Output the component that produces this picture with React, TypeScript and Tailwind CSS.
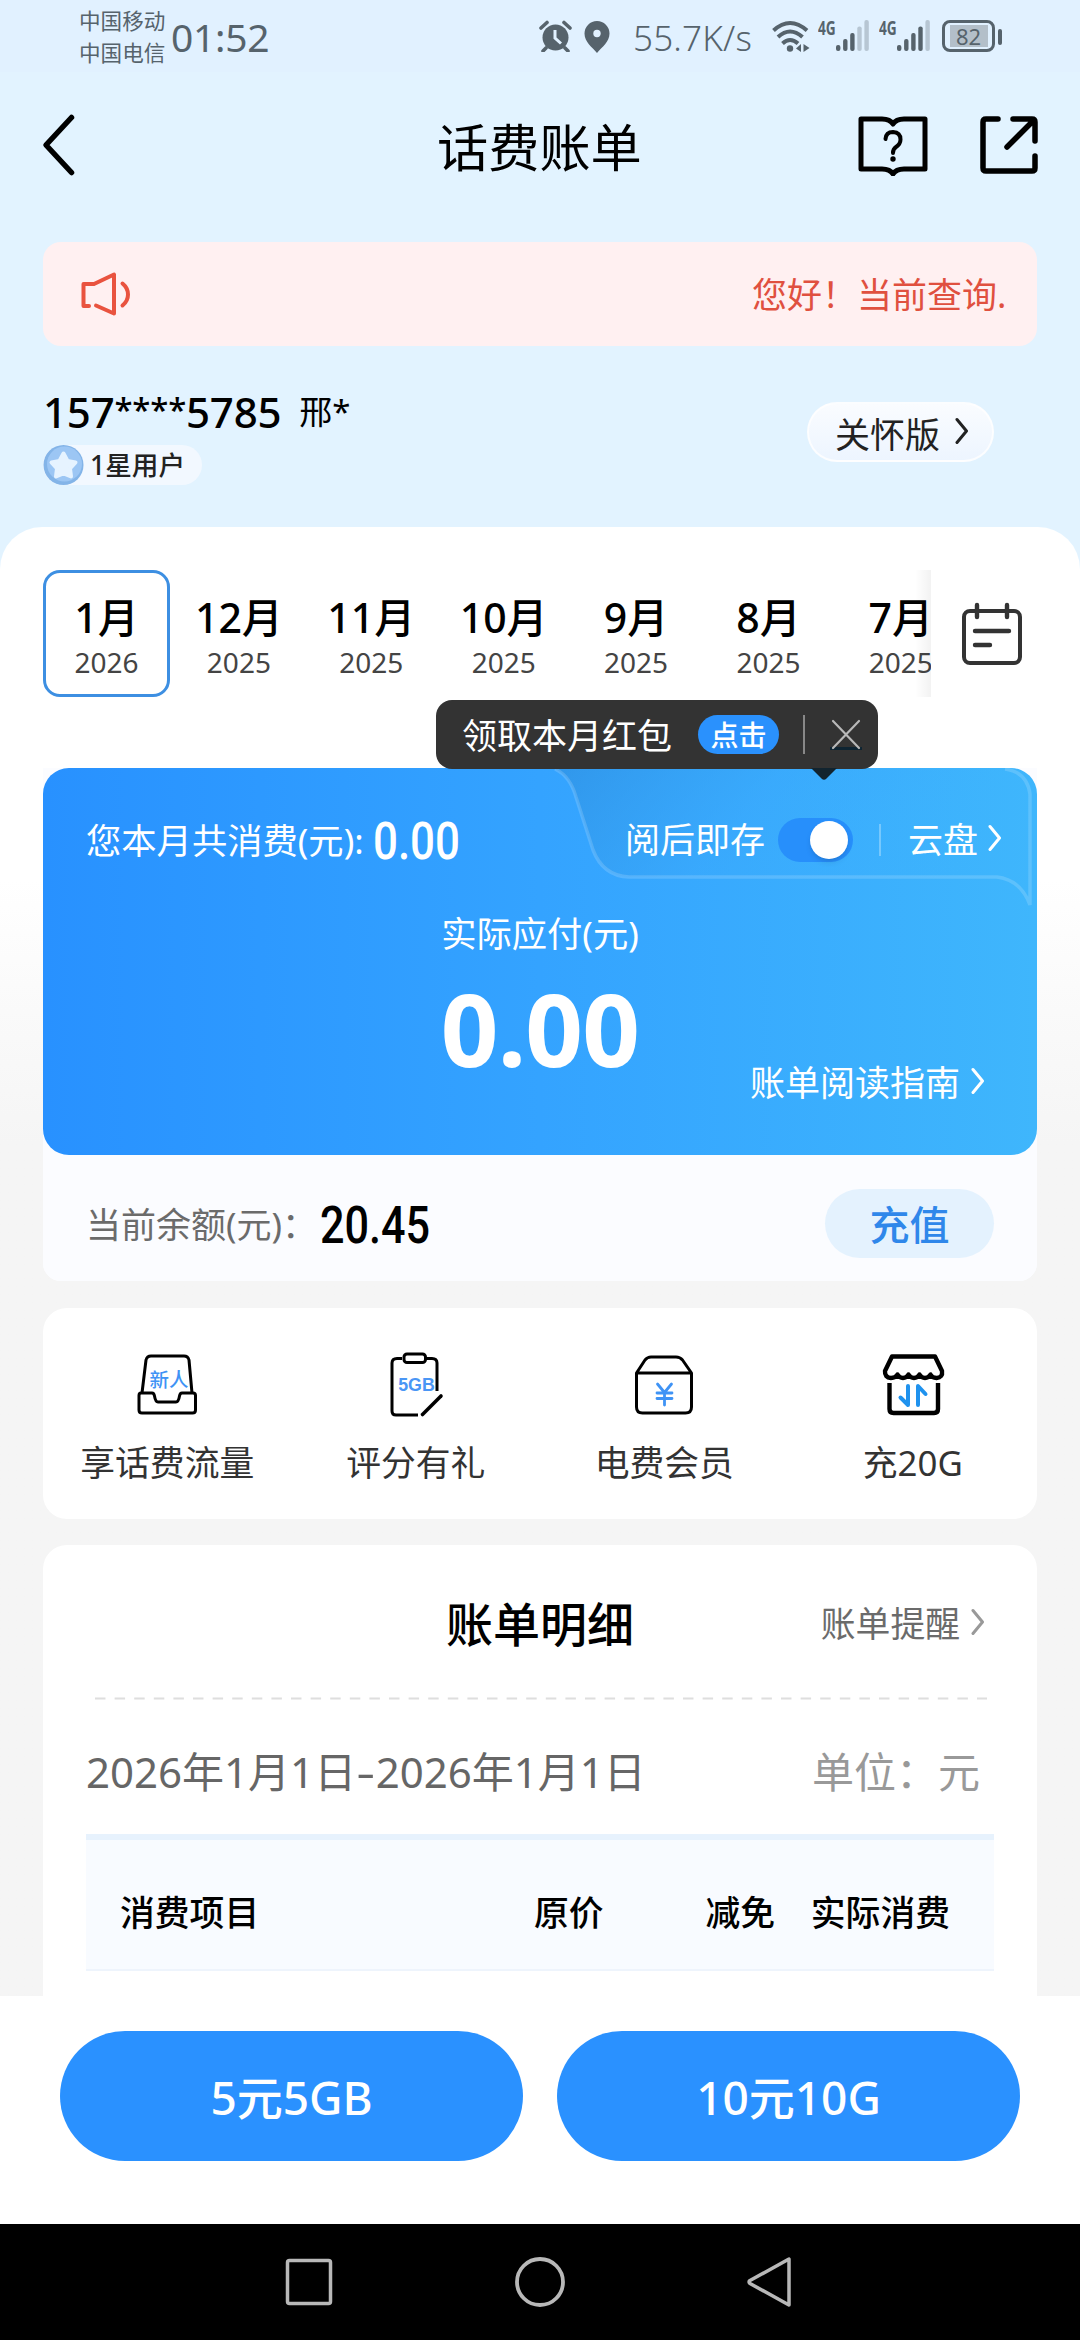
import React from "react";

const months = [
  { m: "1月", y: "2026", active: true },
  { m: "12月", y: "2025" },
  { m: "11月", y: "2025" },
  { m: "10月", y: "2025" },
  { m: "9月", y: "2025" },
  { m: "8月", y: "2025" },
  { m: "7月", y: "2025" },
];

function Chevron({ className = "" }: { className?: string }) {
  return (
    <svg width="14" height="28" viewBox="0 0 14 28" fill="none" stroke="currentColor" strokeWidth="3" strokeLinecap="round" strokeLinejoin="round" className={className}>
      <path d="M2 2.5 11.5 14 2 25.5" />
    </svg>
  );
}

function SignalBars({ active }: { active: number }) {
  return (
    <svg width="34" height="31" viewBox="0 0 34 31" fill="#56636c">
      {[0, 1, 2, 3, 4].map((i) => {
        const h = [6, 12, 18, 24.5, 31][i];
        return <rect key={i} x={i * 7.1} y={31 - h} width="4.4" height={h} rx="2" opacity={i < active ? 1 : 0.3} />;
      })}
    </svg>
  );
}

function StatusBar() {
  return (
    <div className="flex h-[72px] items-start bg-[#e1f1ff] text-[#56636c]">
      <div className="ml-[79px] mt-[5px] w-[87px] text-[21.6px] leading-[32px]">
        <div>中国移动</div>
        <div>中国电信</div>
      </div>
      <div className="ml-[5px] mt-[13px] w-[102px] text-[39px] leading-[48px] tracking-[-0.3px]">01:52</div>
      <svg className="ml-[266px] mt-[20px]" width="34" height="32" viewBox="0 0 34 32" fill="none">
        <circle cx="16.5" cy="17.5" r="13" fill="#56636c" />
        <path d="M16 10v8l6 5.500" stroke="#e1f1ff" strokeWidth="3" />
        <path d="M2 8 8 2.500M31 8 25 2.500M7 28l-3 3M26 28l3 3" stroke="#56636c" strokeWidth="3.600" strokeLinecap="round" />
      </svg>
      <svg className="ml-[11px] mt-[21px]" width="26" height="32" viewBox="0 0 26 32">
        <path d="M13 0a12.500 12.500 0 0 1 12.500 12.500C25.500 21 18 26 13 32 8 26 .5 21 .5 12.500A12.500 12.500 0 0 1 13 0Z" fill="#56636c" />
        <circle cx="13" cy="12.500" r="3.700" fill="#e1f1ff" />
      </svg>
      <div className="ml-[23px] mt-[14px] w-[121px] whitespace-nowrap text-[35px] font-light leading-[48px] tracking-[0.2px]">55.7K/s</div>
      <svg className="ml-[18px] mt-[20px]" width="38" height="33" viewBox="0 0 38 33" fill="none" stroke="#56636c" strokeWidth="4">
        <path d="M1.500 10.500Q18 -4.500 35 10.500M6 17Q18 6 30.500 17M10.500 23.500Q18 16.500 26 23.500" />
        <circle cx="18" cy="28.500" r="3.200" fill="#56636c" stroke="none" />
        <path d="M29 24v8l-5-3.500zM31.500 32v-8l6 4z" fill="#56636c" stroke="none" />
      </svg>
      <div className="ml-[8px] mt-[18px] w-[18px] origin-left scale-x-[0.72] whitespace-nowrap text-[19px] font-bold leading-[20px]">4G</div>
      <div className="mt-[20px]"><SignalBars active={3} /></div>
      <div className="ml-[9px] mt-[18px] w-[18px] origin-left scale-x-[0.72] whitespace-nowrap text-[19px] font-bold leading-[20px]">4G</div>
      <div className="mt-[20px]"><SignalBars active={4} /></div>
      <div className="ml-[11px] mt-[20px] flex h-[32px] w-[53px] items-center justify-center rounded-[8px] border-[3px] border-[#56636c] p-[2px]">
        <div className="flex h-[22px] w-[38px] items-center justify-center bg-[#b3bfc9] text-[22px] leading-[22px]">82</div>
      </div>
      <div className="ml-[3px] mt-[29px] h-[16px] w-[4px] rounded-full bg-[#56636c]" />
    </div>
  );
}

function Header() {
  return (
    <div className="flex h-[146px] items-center pl-[42px]">
      <svg className="shrink-0" width="34" height="64" viewBox="0 0 34 64" fill="none" stroke="#000" strokeWidth="5.500" strokeLinecap="round" strokeLinejoin="round">
        <path d="M29.500 4.500 4 32 29.500 59.500" />
      </svg>
      <div className="ml-[361px] w-[205px] shrink-0 whitespace-nowrap pt-[3px] text-[51.2px] leading-[64px] text-black">话费账单</div>
      <svg className="ml-[216px] shrink-0" width="70" height="62" viewBox="0 0 70 62" fill="none" stroke="#000" strokeWidth="5">
        <path d="M3 5H24Q32 5 35 10 38 5 46 5H67V55H46Q38 55 35 60 32 55 24 55H3Z" strokeLinejoin="round" />
        <path d="M27.500 25Q28 18 35 18 42.500 18.500 42.500 25.500 42.500 30 38 33 35 35 35 39" strokeWidth="4" strokeLinecap="round" />
        <circle cx="35" cy="45" r="2.700" fill="#000" stroke="none" />
      </svg>
      <svg className="ml-[51px] shrink-0" width="60" height="60" viewBox="0 0 60 60" fill="none" stroke="#000" strokeWidth="5.500" strokeLinecap="round" strokeLinejoin="round">
        <path d="M19 4H7Q4 4 4 7V53Q4 56 7 56H53Q56 56 56 53V41" />
        <path d="M34 4H53Q56 4 56 7V26M54 6 28 32" />
      </svg>
    </div>
  );
}

function Notice() {
  return (
    <div className="mx-[43px] mt-[24px] flex h-[104px] items-center rounded-[18px] bg-[#fff0f1]">
      <svg className="ml-[37px] mt-[-1px] shrink-0" width="52" height="48" viewBox="0 0 52 48" fill="none" stroke="#e9533f" strokeWidth="4" strokeLinecap="round" strokeLinejoin="round">
        <path d="M9 36H3.500V14H14L34 4.500V43.500L16 35.500" />
        <path d="M42.500 13.500Q48 18 48 24.500 48 31 42.500 35.500" />
      </svg>
      <div className="ml-[620px] mt-[2px] whitespace-nowrap text-[35px] leading-[52px] text-[#e0503f]">您好！当前查询.</div>
    </div>
  );
}

function UserRow() {
  return (
    <div className="flex h-[181px] px-[43px]">
      <div className="w-[764px] pt-[42px]">
        <div className="flex h-[48px] items-center text-black">
          <span className="flex items-center whitespace-nowrap text-[42px] font-medium leading-[48px] tracking-[-0.2px]">
            <span>157</span>
            <span className="mt-[-5px] text-[33px]">****</span>
            <span>5785</span>
          </span>
          <span className="ml-[18px] text-[33px] leading-[48px]">邢*</span>
        </div>
        <div className="mt-[9px] flex h-[40px] w-[159px] items-center rounded-full bg-[#f2f8ff]">
          <svg width="41" height="40" viewBox="0 0 41 40">
            <circle cx="20.500" cy="20" r="20" fill="#83b4e8" />
            <circle cx="21.500" cy="19" r="17.500" fill="#9cc6f4" />
            <path d="M20.500 8.500 24.500 16 32.500 17.500 27 23.500 28 31.500 20.500 28.500 13 31.500 14 23.500 8.500 17.500 16.500 16Z" fill="#e6f3ff" stroke="#e6f3ff" strokeWidth="4" strokeLinejoin="round" />
          </svg>
          <span className="ml-[6px] text-[26.6px] font-medium leading-[36px] text-[#222]">1星用户</span>
        </div>
      </div>
      <div className="mt-[56px] flex h-[60px] w-[187px] items-center rounded-full border-2 border-white/80 bg-linear-to-b from-[#fafcff] to-[#edf5ff] pl-[26px] text-[#222]">
        <span className="pt-[5px] text-[35px] leading-[52px]">关怀版</span>
        <Chevron className="ml-[15px] mt-[-2px]" />
      </div>
    </div>
  );
}

function MonthTabs() {
  return (
    <div className="flex h-[127px] pl-[43px]">
      <div className="relative flex w-[888px] gap-[5.4px] overflow-hidden">
        {months.map((it) => (
          <div
            key={it.m}
            className={
              it.active
                ? "flex w-[127px] shrink-0 flex-col items-center rounded-[17px] border-[3px] border-[#3d8fe2] pt-[20px]"
                : "flex w-[127px] shrink-0 flex-col items-center pt-[23px]"
            }
          >
            <div className="text-[41px] font-medium leading-[48px] text-black">{it.m}</div>
            <div className="mt-[3px] text-[28px] leading-[36px] text-[#444]">{it.y}</div>
          </div>
        ))}
        <div className="absolute inset-y-0 right-0 w-[16px] bg-linear-to-r from-transparent to-black/5" />
      </div>
      <svg className="ml-[30px] mt-[31px]" width="62" height="66" viewBox="0 0 62 66" fill="none" stroke="#333" strokeWidth="4" strokeLinecap="round">
        <rect x="3" y="10" width="56" height="52" rx="6" />
        <path d="M16 4v12M46 4v12M14 30h34M14 44h15" strokeWidth="4.400" />
      </svg>
    </div>
  );
}

function Tooltip() {
  return (
    <div className="relative z-10 ml-[436px] mt-[3px] flex h-[69px] w-[442px] items-center rounded-[16px] bg-[#333] pl-[26px] text-white">
      <span className="w-[210px] whitespace-nowrap pt-[2px] text-[35px] leading-[50px]">领取本月红包</span>
      <span className="ml-[26px] flex h-[39px] w-[81px] items-center justify-center rounded-full bg-[#2a91fd] pt-[2px] text-[28px] font-medium leading-[37px]">点击</span>
      <span className="ml-[24px] h-[39px] w-[2px] bg-[#888]" />
      <svg className="ml-[25px] mt-[1px]" width="32" height="32" viewBox="0 0 32 32" fill="none">
        <path d="M0 28h32v3H0z" fill="#0e2432" />
        <path d="M3 2 29 29M29 2 3 29" stroke="#b8b8b8" strokeWidth="2.200" strokeLinecap="round" />
      </svg>
      <svg className="absolute left-[375px] top-[68px]" width="26" height="13" viewBox="0 0 26 13">
        <path d="M0 0H26L15.500 10.500Q13 13 10.500 10.500Z" fill="#12242f" />
      </svg>
    </div>
  );
}

function BillCard() {
  return (
    <div className="relative -mt-px h-[387px] rounded-[26px] bg-linear-to-r from-[#2891ff] via-[#34a3ff] to-[#3fb6fc] text-white">
      <svg className="absolute left-[500px] top-0" width="494" height="140" viewBox="0 0 494 140" fill="none">
        <defs>
          <linearGradient id="tabFill" x1="0" y1="0" x2="1" y2="0.250">
            <stop offset="0" stopColor="#2e90e0" stopOpacity="0.650" />
            <stop offset="0.450" stopColor="#3aa8fb" stopOpacity="0.500" />
            <stop offset="1" stopColor="#40b6ff" stopOpacity="0" />
          </linearGradient>
        </defs>
        <path d="M12 1Q27 8 33 29L50 82Q60 108 86 109H454Q478 112 487 137V26Q484 4 462 1Z" fill="url(#tabFill)" />
        <path d="M12 1Q27 8 33 29L50 82Q60 108 86 109H454Q478 112 487 137V26Q484 4 462 1" stroke="#fff" strokeOpacity="0.160" strokeWidth="3.500" />
      </svg>
      <div className="relative flex h-[144px] items-center pl-[43px]">
        <span className="w-[283px] whitespace-nowrap text-[35.3px] leading-[52px]">您本月共消费(元):</span>
        <span className="ml-[4px] w-[86px] origin-left scale-x-[0.86] whitespace-nowrap pt-[4px] font-['Roboto'] text-[51px] font-medium leading-[60px]">0.00</span>
        <span className="ml-[166px] w-[142px] whitespace-nowrap text-[35px] leading-[52px]">阅后即存</span>
        <span className="ml-[11px] flex h-[44px] w-[75px] items-center justify-end rounded-full bg-[#278ffb] pr-[5px]">
          <span className="size-[38px] rounded-full bg-white shadow-md" />
        </span>
        <span className="ml-[26px] h-[32px] w-[2px] bg-white/30" />
        <span className="ml-[27px] text-[35px] leading-[52px]">云盘</span>
        <Chevron className="ml-[10px] mt-[-4px]" />
      </div>
      <div className="mt-[-5px] text-center text-[35.3px] leading-[52px]">实际应付(元)</div>
      <div className="mt-[14px] text-center text-[101px] font-bold leading-[110px] tracking-[-0.8px]">0.00</div>
      <div className="mt-[-26px] flex items-center justify-end pr-[52px]">
        <span className="text-[35px] leading-[52px]">账单阅读指南</span>
        <Chevron className="ml-[11px] mt-[-4px]" />
      </div>
    </div>
  );
}

function Balance() {
  return (
    <div className="flex h-[126px] items-center rounded-b-[18px] bg-[#fbfcff] pl-[43px] pt-[11px]">
      <span className="w-[234px] whitespace-nowrap pt-[2px] text-[35px] leading-[52px] text-[#6b6b6b]">当前余额(元)：</span>
      <span className="w-[505px] origin-left scale-x-[0.83] whitespace-nowrap pt-[5px] font-['Roboto'] text-[52px] font-medium leading-[60px] text-black">20.45</span>
      <span className="flex h-[69px] w-[169px] items-center justify-center rounded-full bg-[#e4f2fe] pt-[3px] text-[40px] font-medium leading-[60px] text-[#2f87ea]">充值</span>
    </div>
  );
}

const TrayIcon = () => (
  <svg width="66" height="66" viewBox="0 0 66 66" fill="none" stroke="#000" strokeWidth="3" strokeLinejoin="round">
    <path d="M8 41 12 8Q13 4 17 4H50Q54 4 55 8L58 41" />
    <path d="M7 41H18Q20 41 20.500 44 21.500 50 24 50H42Q44.500 50 45.500 44 46 41 48 41H59Q61.500 41 61.500 43.500V58Q61.500 61 58.500 61H8Q5 61 5 58V43.500Q5 41 7 41Z" />
    <text x="35" y="35" textAnchor="middle" fontSize="19.500" fontWeight="500" fill="#3f93f5" stroke="none">新人</text>
  </svg>
);

const ClipIcon = () => (
  <svg width="66" height="66" viewBox="0 0 66 66" fill="none" stroke="#000" strokeWidth="3" strokeLinejoin="round">
    <path d="M19 6.500H14Q9 6.500 9 11V59Q9 63 13 63H35M42 6.500H49Q54 6.500 54 11V39" />
    <rect x="21" y="2" width="21.500" height="8.500" rx="3" />
    <path d="M39.500 62.500 58 44" strokeWidth="3.600" strokeLinecap="round" />
    <text x="33.500" y="38.500" textAnchor="middle" fontSize="17.800" fontWeight="700" fontFamily="Liberation Sans" fill="#4a96f5" stroke="none">5GB</text>
  </svg>
);

const YuanIcon = () => (
  <svg width="66" height="66" viewBox="0 0 66 66" fill="none" stroke="#000" strokeWidth="3" strokeLinejoin="round">
    <path d="M5.500 21 14 8Q16.500 5 20 5H45Q49 5 51.500 8L60.500 21V55Q60.500 61 54.500 61H11.500Q5.500 61 5.500 55ZM5.500 21H60.500" />
    <path d="M26.500 32 33.500 40.500 40.500 32M33.500 40.500V53M26 41H41M26 46.500H41" stroke="#3f93f5" strokeWidth="2.800" strokeLinecap="round" />
  </svg>
);

const ShopIcon = () => (
  <svg width="66" height="66" viewBox="0 0 66 66" fill="none" stroke="#000" strokeWidth="4.400" strokeLinejoin="round">
    <path d="M12 4.500H55L62 19Q63 25.500 56.500 26 52 26 50.500 22.500 48.500 26 45 26 41.500 26 39.500 22.500 37.500 26 34 26 30.500 26 28.500 22.500 26.500 26 23 26 19.500 26 17.500 22.500 15.500 26 11 26 4.500 25.500 5 19Z" />
    <path d="M9.500 31V57Q9.500 61 13.500 61H54Q58 61 58 57V31" />
    <path d="M28 34V53L20.500 45.500M38 53V34L45.500 42" stroke="#1f92ee" strokeWidth="4" strokeLinecap="round" />
  </svg>
);

const shortcuts = [
  { label: "享话费流量", icon: <TrayIcon /> },
  { label: "评分有礼", icon: <ClipIcon /> },
  { label: "电费会员", icon: <YuanIcon /> },
  { label: "充20G", icon: <ShopIcon /> },
];

function Shortcuts() {
  return (
    <div className="mt-[27px] grid h-[211px] grid-cols-4 rounded-[24px] bg-white pt-[44px]">
      {shortcuts.map((s) => (
        <div key={s.label} className="flex flex-col items-center">
          {s.icon}
          <div className="mt-[19px] text-[34.8px] leading-[52px] text-[#333]">{s.label}</div>
        </div>
      ))}
    </div>
  );
}

function Detail() {
  return (
    <div className="mt-[26px] h-[451px] overflow-hidden rounded-t-[24px] bg-white px-[43px]">
      <div className="mt-[43px] grid h-[72px] grid-cols-3 items-center">
        <div />
        <div className="text-center text-[47px] font-medium leading-[72px] text-black">账单明细</div>
        <div className="flex items-center justify-end pr-[9px] text-[#6b6b6b]">
          <span className="text-[34.8px] leading-[52px]">账单提醒</span>
          <Chevron className="ml-[11px] mt-[-4px] text-[#999]" />
        </div>
      </div>
      <svg className="ml-[9px] mt-[37px]" width="892" height="3" viewBox="0 0 892 3">
        <path d="M0 1.500H892" stroke="#dedede" strokeWidth="2" strokeDasharray="10.500 9.100" />
      </svg>
      <div className="mt-[42px] flex h-[60px] items-center justify-between pr-[14px] text-[42px] leading-[60px]">
        <span className="whitespace-nowrap text-[#666]">
          2026年1月1日<span className="inline-block scale-x-[1.4] px-[3px]">-</span>2026年1月1日
        </span>
        <span className="whitespace-nowrap text-[#999]">单位：元</span>
      </div>
      <div className="mt-[32px] flex h-[137px] items-center whitespace-nowrap border-b-2 border-t-[6px] border-b-[#eef4fc] border-t-[#e7f2fd] bg-[#f8fbff] pt-[16px] text-[34.8px] font-medium leading-[52px] text-black">
        <span className="w-[414px] pl-[34px]">消费项目</span>
        <span className="w-[103px] pl-[34px]">原价</span>
        <span className="w-[172px] text-right">减免</span>
        <span className="w-[175px] text-right">实际消费</span>
      </div>
    </div>
  );
}

export default function App() {
  return (
    <div className="flex h-[2340px] w-[1080px] flex-col overflow-hidden bg-[#e2f3ff] font-['Noto_Sans','Noto_Sans_CJK_SC',sans-serif]">
      <StatusBar />
      <Header />
      <Notice />
      <UserRow />
      <div className="h-[1469px] rounded-t-[42px] bg-linear-to-b from-white from-[24%] to-[#f5f5f5] to-[42%] pt-[43px]">
        <MonthTabs />
        <Tooltip />
        <div className="mx-[43px]">
          <div className="rounded-b-[18px] bg-[#fbfcff]">
            <BillCard />
            <Balance />
          </div>
          <Shortcuts />
          <Detail />
        </div>
      </div>
      <div className="flex h-[228px] gap-[34px] bg-white px-[60px] pt-[35px]">
        <div className="flex h-[130px] flex-1 items-center justify-center rounded-full bg-[#2a91ff] pt-[2px] text-[46px] font-medium leading-[64px] text-white">5元5GB</div>
        <div className="flex h-[130px] flex-1 items-center justify-center rounded-full bg-[#2a91ff] pt-[2px] text-[46px] font-medium leading-[64px] text-white">10元10G</div>
      </div>
      <div className="flex h-[116px] items-center bg-black pl-[285px]">
        <svg width="48" height="52" viewBox="0 0 48 52" fill="none" stroke="#b8b8b8" strokeWidth="3.500">
          <rect x="2.500" y="4.500" width="43" height="43" rx="2" />
        </svg>
        <svg className="ml-[181px]" width="52" height="52" viewBox="0 0 52 52" fill="none" stroke="#b8b8b8" strokeWidth="3.800">
          <circle cx="26" cy="26" r="23" />
        </svg>
        <svg className="ml-[180px]" width="46" height="52" viewBox="0 0 46 52" fill="none" stroke="#b8b8b8" strokeWidth="3.500" strokeLinejoin="round">
          <path d="M43 3V49L4 27.500Q2 26 4 24.500Z" />
        </svg>
      </div>
    </div>
  );
}
